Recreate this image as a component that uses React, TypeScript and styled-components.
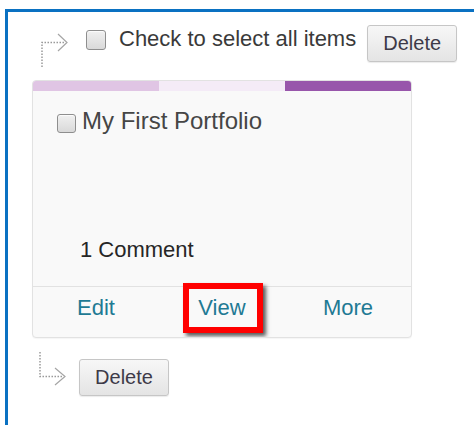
import styled, { createGlobalStyle } from "styled-components";

const GlobalStyle = createGlobalStyle`
  html, body {
    margin: 0;
    padding: 0;
    overflow: hidden;
    background: #ffffff;
    font-family: "Liberation Sans", Arial, sans-serif;
  }
`;

// only the top and left edges of the panel show in this view
const Frame = styled.div`
  margin: 9px 0 0 5px;
  height: calc(100vh - 9px);
  border-top: 3px solid #0a71c2;
  border-left: 3px solid #0a71c2;
  padding: 13px 0 0 24px;
  box-sizing: border-box;
  overflow: hidden;
`;

const ActionRow = styled.div<{ $top?: number }>`
  display: flex;
  align-items: flex-start;
  margin-top: ${({ $top }) => $top ?? 0}px;
`;

const Branch = styled.svg<{ $top?: number }>`
  display: block;
  margin: ${({ $top }) => $top ?? 0}px 0 0 4px;
  flex: none;
`;

const Check = styled.span<{ $size: number; $top: number; $left?: number }>`
  display: block;
  flex: none;
  box-sizing: border-box;
  width: ${({ $size }) => $size}px;
  height: ${({ $size }) => $size}px;
  margin-top: ${({ $top }) => $top}px;
  margin-left: ${({ $left }) => $left ?? 0}px;
  border: 1px solid #8e8e8e;
  border-radius: 3px;
  background: linear-gradient(#f0f0f0, #d9d9d9);
  box-shadow: inset 0 1px 1px rgba(255, 255, 255, 0.8);
`;

const SelectLabel = styled.span`
  margin: 1px 0 0 13px;
  font-size: 22px;
  line-height: 26px;
  color: #3a3a3a;
  white-space: nowrap;
`;

const Button = styled.button<{ $left: number; $top?: number }>`
  flex: none;
  width: 90px;
  height: 37px;
  margin: ${({ $top }) => $top ?? 0}px 0 0 ${({ $left }) => $left}px;
  padding: 0;
  border: 1px solid #c6c6c6;
  border-radius: 3px;
  background: linear-gradient(#f7f7f7, #e4e4e4);
  font-family: "Liberation Sans", Arial, sans-serif;
  font-size: 20px;
  color: #3d3a48;
  box-shadow: 0 1px 1px rgba(0, 0, 0, 0.08);
`;

const Card = styled.div`
  margin-top: 10px;
  width: 378px;
  border: 1px solid #e2e2e2;
  border-radius: 4px;
  background: #f9f9f9;
  overflow: hidden;
  box-shadow: 0 1px 1px rgba(0, 0, 0, 0.04);
`;

const ColorBar = styled.div`
  display: grid;
  grid-template-columns: repeat(3, 1fr);
  height: 10px;
`;

const BarPart = styled.div<{ $color: string }>`
  background: ${({ $color }) => $color};
`;

const CardBody = styled.div`
  height: 195px;
  box-sizing: border-box;
  padding: 16px 0 0 24px;
  display: flex;
  flex-direction: column;
  justify-content: space-between;
`;

const TitleRow = styled.div`
  display: flex;
  align-items: flex-start;
`;

const Title = styled.span`
  margin-left: 6px;
  font-size: 24px;
  line-height: 28px;
  color: #464646;
`;

const Comments = styled.div`
  margin: 0 0 23px 23px;
  font-size: 22px;
  line-height: 26px;
  color: #262626;
`;

const Footer = styled.div`
  display: grid;
  grid-template-columns: repeat(3, 1fr);
  height: 50px;
  border-top: 1px solid #e2e2e2;
`;

const FooterCell = styled.div`
  position: relative;
  display: flex;
  justify-content: center;
  padding-top: 8px;
`;

const FooterLink = styled.a`
  font-size: 22px;
  line-height: 26px;
  color: #1f7a94;
  text-decoration: none;
`;

const Highlight = styled.span`
  position: absolute;
  left: 24px;
  top: -4px;
  width: 80px;
  height: 50px;
  box-sizing: border-box;
  border: 6px solid #ff0000;
  box-shadow: 3px 3px 4px rgba(0, 0, 0, 0.65);
  pointer-events: none;
`;

const dotted = {
  fill: "none",
  stroke: "#9a9a9a",
  strokeWidth: 1.5,
  strokeDasharray: "1.5 1.5",
};

const chevron = { fill: "none", stroke: "#a5a5a5", strokeWidth: 1.2 };

const App = () => {
  const links = ["Edit", "View", "More"];

  return (
    <>
      <GlobalStyle />
      <Frame>
        <ActionRow>
          <Branch $top={5} width={34} height={40} viewBox="0 0 34 40">
            <path d="M6 37V12.5H29" style={dotted} />
            <path d="M22 4l9 8.5-9 8.5" style={chevron} />
          </Branch>
          <Check $size={20} $top={5} $left={16} />
          <SelectLabel>Check to select all items</SelectLabel>
          <Button $left={11}>Delete</Button>
        </ActionRow>

        <Card>
          <ColorBar>
            <BarPart $color="#e0c5e4" />
            <BarPart $color="#f4ebf7" />
            <BarPart $color="#9856ab" />
          </ColorBar>
          <CardBody>
            <TitleRow>
              <Check $size={19} $top={7} />
              <Title>My First Portfolio</Title>
            </TitleRow>
            <Comments>1 Comment</Comments>
          </CardBody>
          <Footer>
            {links.map((label) => (
              <FooterCell key={label}>
                <FooterLink href="#">{label}</FooterLink>
                {label === "View" && <Highlight />}
              </FooterCell>
            ))}
          </Footer>
        </Card>

        <ActionRow $top={12}>
          <Branch width={34} height={40} viewBox="0 0 34 40">
            <path d="M4 2V26.5H27" style={dotted} />
            <path d="M19 18l10 8.5-10 8.5" style={chevron} />
          </Branch>
          <Button $left={9} $top={9}>
            Delete
          </Button>
        </ActionRow>
      </Frame>
    </>
  );
};

export default App;
